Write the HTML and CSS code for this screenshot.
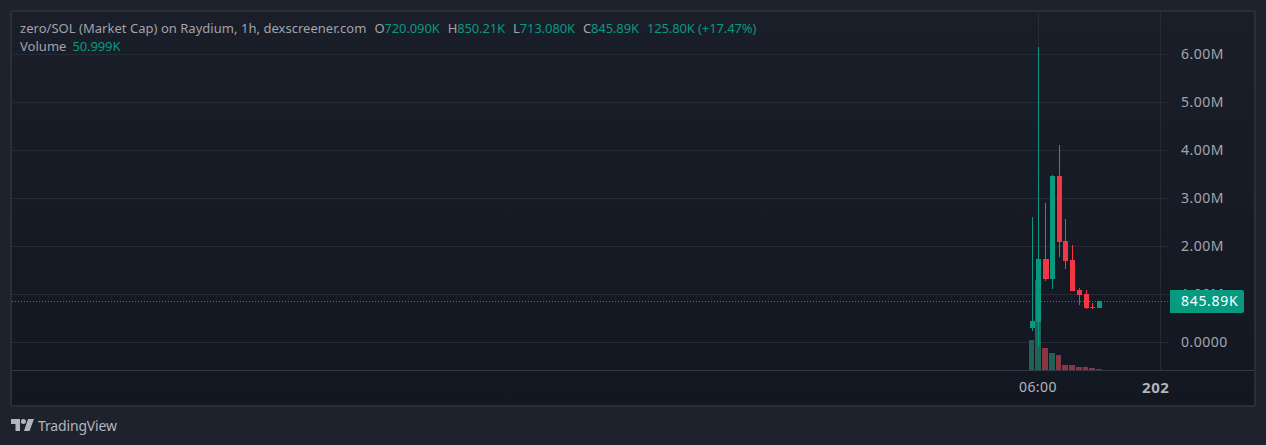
FILE: index.html
```html
<!DOCTYPE html>
<html lang="en">
<head>
<meta charset="utf-8">
<title>zero/SOL chart</title>
<link rel="stylesheet" href="styles.css">
</head>
<body>
<main class="widget">
  <section class="chart">
    <div class="panes">
      <div class="plot">
        <svg class="canvas" width="1157" height="358" viewBox="12 12 1157 358" shape-rendering="crispEdges" aria-hidden="true">
          <g class="grid">
            <path d="M12 54.5H1169M12 102.5H1169M12 150.5H1169M12 198.5H1169M12 246.5H1169M12 294.5H1169M12 342.5H1169"/>
            <path d="M1038.5 12V370M1160.5 12V370"/>
          </g>
          <g class="vol-up">
            <rect x="1029" y="340" width="5" height="30"/>
            <rect x="1035" y="280" width="6" height="90"/>
            <rect x="1049" y="353" width="6" height="17"/>
            <rect x="1096" y="369" width="6" height="1"/>
          </g>
          <g class="vol-down">
            <rect x="1042" y="348" width="6" height="22"/>
            <rect x="1056" y="355" width="5" height="15"/>
            <rect x="1062" y="365" width="6" height="5"/>
            <rect x="1069" y="365" width="6" height="5"/>
            <rect x="1076" y="367" width="6" height="3"/>
            <rect x="1083" y="367" width="5" height="3"/>
            <rect x="1089" y="368" width="6" height="2"/>
          </g>
          <path class="last" d="M12 301.5H1169"/>
          <g class="up">
            <rect x="1032" y="217" width="1" height="114"/>
            <rect x="1030" y="321" width="5" height="7"/>
            <rect x="1038" y="47" width="1" height="300"/>
            <rect x="1036" y="259" width="5" height="63"/>
            <rect x="1052" y="175" width="1" height="114"/>
            <rect x="1050" y="176" width="5" height="103"/>
            <rect x="1097" y="301" width="5" height="7"/>
          </g>
          <g class="down">
            <rect x="1045" y="203" width="1" height="78"/>
            <rect x="1043" y="259" width="6" height="20"/>
            <rect x="1059" y="145" width="1" height="112"/>
            <rect x="1057" y="176" width="5" height="66"/>
            <rect x="1065" y="219" width="1" height="50"/>
            <rect x="1063" y="241" width="5" height="20"/>
            <rect x="1072" y="245" width="1" height="46"/>
            <rect x="1070" y="260" width="5" height="31"/>
            <rect x="1079" y="288" width="1" height="17"/>
            <rect x="1077" y="290" width="5" height="5"/>
            <rect x="1086" y="290" width="1" height="19"/>
            <rect x="1084" y="294" width="5" height="14"/>
            <rect x="1092" y="303" width="1" height="6"/>
            <rect x="1090" y="307" width="5" height="1"/>
          </g>
        </svg>
        <div class="legend">
          <div class="legend-row">
            <span class="symbol">zero/SOL (Market Cap) on Raydium, 1h, dexscreener.com</span>
            <span class="ohlc"><span class="key">O</span>720.090K</span>
            <span class="ohlc"><span class="key">H</span>850.21K</span>
            <span class="ohlc"><span class="key">L</span>713.080K</span>
            <span class="ohlc"><span class="key">C</span>845.89K</span>
            <span class="ohlc">125.80K (+17.47%)</span>
          </div>
          <div class="legend-row legend-volume">
            <span class="symbol">Volume</span>
            <span class="ohlc">50.999K</span>
          </div>
        </div>
      </div>
      <div class="price-axis">
        <span class="price">6.00M</span>
        <span class="price">5.00M</span>
        <span class="price">4.00M</span>
        <span class="price">3.00M</span>
        <span class="price">2.00M</span>
        <span class="price">1.00M</span>
        <span class="price">0.0000</span>
        <span class="last-price">845.89K</span>
      </div>
    </div>
    <div class="time-axis">
      <span class="tick tick-hour">06:00</span>
      <span class="tick tick-year">202</span>
    </div>
  </section>
  <footer class="brand">
    <svg class="logo" width="23" height="12" viewBox="0 0 23 12" aria-hidden="true">
      <path d="M0 0H9V12H4.5V5H0Z"/>
      <circle cx="12.4" cy="2.6" r="2.5"/>
      <path d="M17 0H23L18.5 12H13Z"/>
    </svg>
    <span class="brand-name">TradingView</span>
  </footer>
</main>
</body>
</html>
```
FILE: styles.css
```css
* {
  box-sizing: border-box;
}

html,
body {
  margin: 0;
  height: 100%;
}

body {
  background: #1e222d;
  overflow: hidden;
  font-family: "Noto Sans", "Open Sans", sans-serif;
}

.widget {
  display: flex;
  flex-direction: column;
  width: 1266px;
  height: 445px;
  padding: 10px 10px 0;
}

.chart {
  display: flex;
  flex-direction: column;
  width: 1246px;
  height: 397px;
  border: 2px solid #2a2e39;
  border-radius: 2px;
  background: linear-gradient(180deg, #1a1e29 0%, #131722 100%);
}

.panes {
  display: flex;
  height: 359px;
  border-bottom: 1px solid #363a45;
}

.plot {
  position: relative;
  width: 1157px;
  height: 358px;
}

.canvas {
  display: block;
}

.grid path {
  fill: none;
  stroke: #262a35;
  stroke-width: 1;
}

.up rect {
  fill: #089981;
}

.down rect {
  fill: #f23645;
}

.vol-up rect {
  fill: #1f6358;
}

.vol-down rect {
  fill: #8a3541;
}

.last {
  fill: none;
  stroke: #089981;
  stroke-width: 1;
  stroke-dasharray: 1 2;
}

.legend {
  position: absolute;
  top: 7px;
  left: 8px;
  display: flex;
  flex-direction: column;
  font-size: 13px;
  line-height: 18px;
  letter-spacing: 0.03px;
}

.legend-row {
  display: flex;
  gap: 8px;
  white-space: nowrap;
}

.legend-volume {
  gap: 6px;
}

.symbol,
.key {
  color: #a0a3ac;
}

.ohlc {
  color: #089981;
  letter-spacing: -0.12px;
}

.price-axis {
  position: relative;
  display: flex;
  flex-direction: column;
  width: 85px;
  padding: 31px 0 0 12px;
  gap: 26px;
  font-size: 14px;
  line-height: 22px;
  letter-spacing: 0.5px;
  color: #a3a6af;
}

.price {
  display: block;
}

.last-price {
  position: absolute;
  top: 278px;
  left: 1px;
  width: 74px;
  height: 23px;
  padding-left: 11px;
  border-radius: 0 2px 2px 0;
  background: #089981;
  color: #ffffff;
  font-size: 14px;
  line-height: 22px;
  letter-spacing: 0.7px;
}

.time-axis {
  position: relative;
  height: 34px;
  font-size: 14px;
  letter-spacing: 0.4px;
  color: #b2b5be;
  line-height: 32px;
}

.tick {
  position: absolute;
  top: 0;
}

.tick-hour {
  left: 1007px;
}

.tick-year {
  left: 1130px;
  font-size: 15px;
  font-weight: 700;
  letter-spacing: 0.6px;
}

.brand {
  display: flex;
  align-items: center;
  gap: 4px;
  height: 36px;
  padding-left: 1px;
  color: #b2b5be;
}

.logo {
  fill: #b2b5be;
}

.brand-name {
  font-size: 14px;
  letter-spacing: -0.15px;
}
```
